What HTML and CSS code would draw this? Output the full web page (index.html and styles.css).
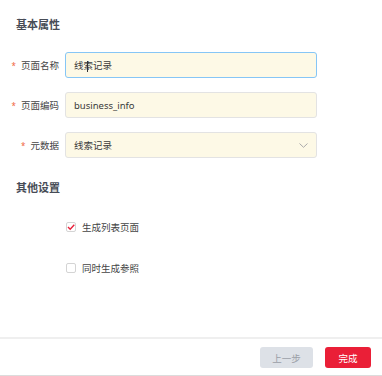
FILE: index.html
```html
<!DOCTYPE html>
<html lang="zh">
<head>
<meta charset="utf-8">
<link rel="stylesheet" href="styles.css">
</head>
<body>
<div class="main">
  <div class="section-title first">基本属性</div>
  <div class="form">
    <div class="row">
      <div class="label"><span class="req">*</span>页面名称</div>
      <div class="field focused"><span class="val">线索<span class="caret"></span>记录</span></div>
    </div>
    <div class="row">
      <div class="label"><span class="req">*</span>页面编码</div>
      <div class="field"><span class="val">business_info</span></div>
    </div>
    <div class="row">
      <div class="label"><span class="req">*</span>元数据</div>
      <div class="field select"><span class="val">线索记录</span>
        <svg class="chev" width="9" height="5" viewBox="0 0 9 5"><path d="M0.5 0.5 L4.5 4.3 L8.5 0.5" fill="none" stroke="#aaa" stroke-width="1"/></svg>
      </div>
    </div>
  </div>
  <div class="section-title second">其他设置</div>
  <div class="checks">
    <label class="check">
      <span class="box"><svg width="10" height="10" viewBox="0 0 10 10"><path d="M2 5 L4.2 7.2 L8.3 2.8" fill="none" stroke="#e8203a" stroke-width="1.4"/></svg></span>
      <span>生成列表页面</span>
    </label>
    <label class="check">
      <span class="box"></span>
      <span>同时生成参照</span>
    </label>
  </div>
</div>
<div class="footer">
  <button class="btn prev">上一步</button>
  <button class="btn done">完成</button>
</div>
</body>
</html>
```

FILE: styles.css
```css
html, body {
  margin: 0;
  height: 100%;
}
body {
  display: flex;
  flex-direction: column;
  background: #fff;
  font-family: "Noto Sans", "Noto Sans CJK SC", sans-serif;
  font-size: 9.5px;
  color: #444;
}
.main {
  flex: 1;
  padding: 0 16px;
}
.section-title {
  font-size: 11px;
  line-height: 14px;
  font-weight: 600;
  color: #474c56;
}
.section-title.first { margin-top: 18px; }
.section-title.second { margin-top: 23px; }
.form {
  margin-top: 20px;
  margin-left: -16px;
  display: flex;
  flex-direction: column;
  gap: 14px;
}
.row {
  display: flex;
  align-items: center;
  height: 26px;
}
.label {
  width: 65px;
  box-sizing: border-box;
  padding-right: 6px;
  text-align: right;
  color: #444;
}
.req {
  color: #f0643c;
  font-size: 8px;
  margin-right: 5px;
}
.field {
  width: 252px;
  height: 26px;
  box-sizing: border-box;
  border: 1px solid #e3e3e3;
  border-radius: 3px;
  background: #fdf9e6;
  display: flex;
  align-items: center;
  justify-content: space-between;
  padding: 0 8px 0 8px;
  color: #3a3a3a;
}
.field.focused {
  border-color: #86c6f6;
}
.val { position: relative; }
.caret {
  display: inline-block;
  width: 1px;
  height: 11px;
  background: #333;
  vertical-align: middle;
  margin-left: -6px;
  margin-right: 5px;
}
.chev { display: block; }
.checks {
  margin-top: 25px;
  margin-left: 50px;
  display: flex;
  flex-direction: column;
  gap: 27px;
}
.check {
  display: flex;
  align-items: center;
  height: 14px;
  gap: 6px;
  color: #444;
}
.box {
  width: 10px;
  height: 10px;
  box-sizing: border-box;
  border: 1px solid #d4d4d4;
  border-radius: 2px;
  background: #fff;
  display: flex;
  align-items: center;
  justify-content: center;
  overflow: visible;
}
.box svg { flex: none; }
.footer {
  border-top: 2px solid #efefef;
  border-bottom: 1px solid #dcdcdc;
  padding: 8px 11px 7px 0;
  display: flex;
  justify-content: flex-end;
  gap: 12px;
}
.btn {
  height: 21px;
  border: none;
  border-radius: 3px;
  font-family: "Noto Sans CJK SC", sans-serif;
  font-size: 9.5px;
  padding: 0;
}
.btn.prev {
  width: 53px;
  background: #dde1e7;
  color: #9a9ea6;
}
.btn.done {
  width: 46px;
  background: #ea1f37;
  color: #fff;
}
```
